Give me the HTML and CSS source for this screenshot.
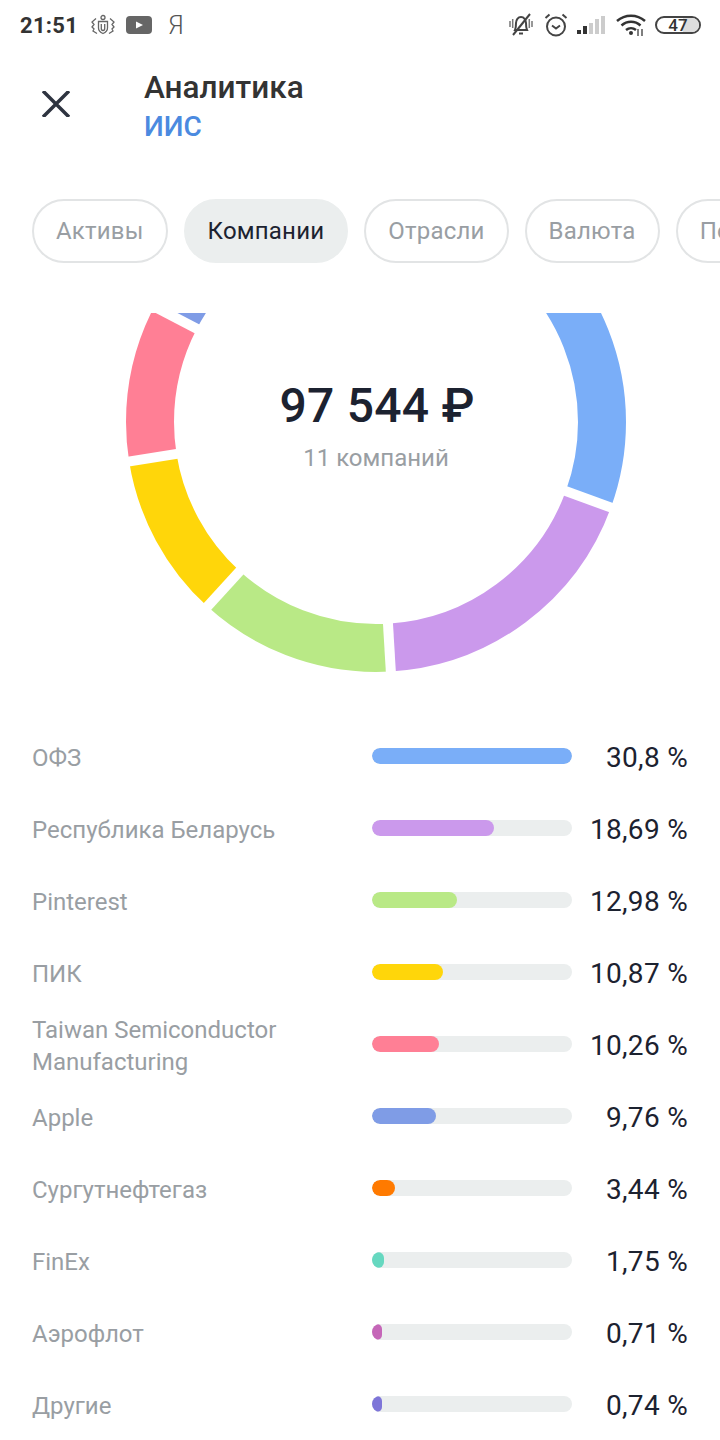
FILE: index.html
```html
<!DOCTYPE html>
<html lang="ru">
<head>
    <meta charset="UTF-8">
    <meta name="viewport" content="width=device-width, initial-scale=1.0">
    <title>Аналитика</title>
    <link rel="stylesheet" href="styles.css">
</head>
<body>

    <div class="status-bar">
        <div class="status-left">
            <span class="time">21:51</span>
            <svg class="icon-crest" viewBox="0 0 24 24" width="24" height="24" fill="none" stroke="#666" stroke-width="1.3">
                <circle cx="12" cy="4.500" r="2"/>
                <path d="M7.500 8.500h9v6.500c0 3-2 4.500-4.500 5.500-2.500-1-4.500-2.500-4.500-5.500z"/>
                <path d="M10.300 11v4.500c0 1 .7 2 1.700 2s1.700-1 1.700-2v-4.500"/>
                <path d="M5 5.500L1 9l2 2.500L1 14l2 2-1 2 4 2.500M19 5.500L23 9l-2 2.500 2 2.500-2 2 1 2-4 2.500"/>
            </svg>
            <svg class="icon-yt" viewBox="0 0 26 18" width="26" height="18">
                <rect width="26" height="18" rx="4" fill="#666"/>
                <path d="M10 5.500l7 3.500-7 3.500z" fill="#fff"/>
            </svg>
            <span class="ya">Я</span>
        </div>
        <div class="status-right">
            <svg viewBox="0 0 24 24" width="24" height="24" fill="none" stroke="#444" stroke-width="2">
                <path d="M6 17c1-2 1-4 1-7 0-3 2-6 5-6s5 3 5 6c0 3 0 5 1 7z"/>
                <path d="M10 20.500h4"/>
                <path d="M21 1L4 22"/>
                <path d="M1 8v6M3.700 6v9M20.300 6v9M23 8v6" stroke="#777" stroke-width="1.500"/>
            </svg>
            <svg class="icon-alarm" viewBox="0 0 24 24" width="24" height="24" fill="none" stroke="#444" stroke-width="2">
                <circle cx="12" cy="13.500" r="9"/>
                <path d="M8 12.500l4 3 4-3"/>
                <path d="M1.500 5l4-3.500M22.500 5l-4-3.500"/>
            </svg>
            <svg class="icon-signal" viewBox="0 0 28 20" width="28" height="20">
                <rect x="0" y="15" width="4" height="4" fill="#333"/>
                <rect x="6" y="11" width="4" height="8" fill="#333"/>
                <rect x="12" y="8" width="4" height="11" fill="#ccc"/>
                <rect x="18" y="4" width="4" height="15" fill="#ccc"/>
                <rect x="24" y="1" width="4" height="18" fill="#ccc"/>
            </svg>
            <svg class="icon-wifi" viewBox="0 0 30 24" width="30" height="24" fill="none" stroke="#333" stroke-width="2.500">
                <path d="M1 8c8-7 20-7 28 0"/>
                <path d="M5.500 12.500c5.500-5 13.500-5 19 0"/>
                <path d="M10 17c3-2.500 7-2.500 10 0"/>
                <circle cx="15" cy="20" r="2" fill="#333" stroke="none"/>
                <path d="M22 16v7M26 16v7" stroke-width="1.500" stroke="#555"/>
            </svg>
            <div class="battery"><span class="battery-level"></span><span class="battery-text">47</span></div>
        </div>
    </div>

    <div class="header">
        <svg class="close" viewBox="0 0 28 26" width="28" height="26" fill="none" stroke="#2e3440" stroke-width="3.500">
            <path d="M1 0l26 26M27 0L1 26"/>
        </svg>
        <div>
            <div class="title">Аналитика</div>
            <div class="subtitle">ИИС</div>
        </div>
    </div>

    <div class="chips">
        <div class="chip">Активы</div>
        <div class="chip active">Компании</div>
        <div class="chip">Отрасли</div>
        <div class="chip">Валюта</div>
        <div class="chip">Портфели</div>
    </div>

    <div class="chart">
        <svg viewBox="0 313 720 360" width="720" height="360" fill="none" stroke-width="48">
            <g transform="rotate(-90 376 422)">
                <circle cx="376" cy="422" r="226" pathLength="360" stroke="#7aaef8" stroke-dasharray="110 250"/>
                <circle cx="376" cy="422" r="226" pathLength="360" stroke="#cb99ec" stroke-dasharray="66.6 293.4" stroke-dashoffset="-110"/>
                <circle cx="376" cy="422" r="226" pathLength="360" stroke="#b9e986" stroke-dasharray="45.8 314.2" stroke-dashoffset="-176.6"/>
                <circle cx="376" cy="422" r="226" pathLength="360" stroke="#ffd60a" stroke-dasharray="38.5 321.5" stroke-dashoffset="-222.4"/>
                <circle cx="376" cy="422" r="226" pathLength="360" stroke="#ff7f95" stroke-dasharray="36.6 323.4" stroke-dashoffset="-260.9"/>
                <circle cx="376" cy="422" r="226" pathLength="360" stroke="#7f9ce6" stroke-dasharray="40 320" stroke-dashoffset="-297.5"/>
            </g>
            <g stroke="#fff" stroke-width="10">
                <path d="M376 422V160" transform="rotate(110 376 422)"/>
                <path d="M376 422V160" transform="rotate(176.6 376 422)"/>
                <path d="M376 422V160" transform="rotate(222.4 376 422)"/>
                <path d="M376 422V160" transform="rotate(260.9 376 422)"/>
                <path d="M376 422V160" transform="rotate(297.5 376 422)"/>
            </g>
        </svg>
        <div class="chart-center">
            <div class="total">97 544 ₽</div>
            <div class="count">11 компаний</div>
        </div>
    </div>

    <div class="list">
        <div class="row">
            <div class="name">ОФЗ</div>
            <div class="track"><div class="fill c1" style="width: 100%"></div></div>
            <div class="pct">30,8 %</div>
        </div>
        <div class="row">
            <div class="name">Республика Беларусь</div>
            <div class="track"><div class="fill c2" style="width: 61%"></div></div>
            <div class="pct">18,69 %</div>
        </div>
        <div class="row">
            <div class="name">Pinterest</div>
            <div class="track"><div class="fill c3" style="width: 42.5%"></div></div>
            <div class="pct">12,98 %</div>
        </div>
        <div class="row">
            <div class="name">ПИК</div>
            <div class="track"><div class="fill c4" style="width: 35.5%"></div></div>
            <div class="pct">10,87 %</div>
        </div>
        <div class="row">
            <div class="name">Taiwan Semiconductor Manufacturing</div>
            <div class="track"><div class="fill c5" style="width: 33.500%"></div></div>
            <div class="pct">10,26 %</div>
        </div>
        <div class="row">
            <div class="name">Apple</div>
            <div class="track"><div class="fill c6" style="width: 32%"></div></div>
            <div class="pct">9,76 %</div>
        </div>
        <div class="row">
            <div class="name">Сургутнефтегаз</div>
            <div class="track"><div class="fill c7" style="width: 11.500%"></div></div>
            <div class="pct">3,44 %</div>
        </div>
        <div class="row">
            <div class="name">FinEx</div>
            <div class="track"><div class="fill c8" style="width: 6%"></div></div>
            <div class="pct">1,75 %</div>
        </div>
        <div class="row">
            <div class="name">Аэрофлот</div>
            <div class="track"><div class="fill c9" style="width: 5%"></div></div>
            <div class="pct">0,71 %</div>
        </div>
        <div class="row">
            <div class="name">Другие</div>
            <div class="track"><div class="fill c10" style="width: 5%"></div></div>
            <div class="pct">0,74 %</div>
        </div>
    </div>

</body>
</html>
```

FILE: styles.css
```css
body {
    font-family: Roboto, "Noto Sans", sans-serif;
    background-color: #fff;
    margin: 0;
    overflow-x: hidden;
}

.status-bar {
    height: 48px;
    box-sizing: border-box;
    display: flex;
    justify-content: space-between;
    align-items: center;
    padding: 2px 19px 0 20px;
    color: #333;
}
.status-left, .status-right {
    display: flex;
    align-items: center;
}
.time {
    font-size: 22px;
    font-weight: 700;
    letter-spacing: 0.3px;
}
.icon-crest {
    margin-left: 13px;
}
.icon-yt {
    margin-left: 11px;
}
.ya {
    margin-left: 16px;
    font-size: 25px;
    font-weight: 300;
    color: #555;
}
.status-right {
    gap: 9px;
}
.icon-alarm {
    margin-left: 2px;
}
.icon-signal {
    margin-right: 2px;
}
.battery {
    position: relative;
    width: 46px;
    height: 18px;
    box-sizing: border-box;
    border: 2px solid #444;
    border-radius: 9px;
    overflow: hidden;
    display: flex;
    justify-content: center;
    align-items: center;
}
.battery-level {
    position: absolute;
    top: 0;
    bottom: 0;
    right: 0;
    width: 16px;
    background: #ddd;
}
.battery-text {
    position: relative;
    font-size: 17px;
    font-weight: 500;
}

.header {
    display: flex;
    align-items: flex-start;
    padding: 20px 0 0 42px;
}
.close {
    margin: 23px 74px 0 0;
}
.title {
    font-size: 31.5px;
    font-weight: 500;
    line-height: 39px;
    color: #333;
}
.subtitle {
    font-size: 28px;
    font-weight: 500;
    line-height: 39px;
    color: #4b8ae0;
}

.chips {
    display: flex;
    gap: 16px;
    margin-top: 53px;
    padding-left: 32px;
    overflow: hidden;
}
.chip {
    flex: none;
    height: 64px;
    box-sizing: border-box;
    padding: 0 22px;
    border: 2px solid #e2e4e5;
    border-radius: 32px;
    display: flex;
    align-items: center;
    font-size: 24px;
    letter-spacing: 0.2px;
    color: #999ea3;
}
.chip.active {
    background: #ebeeee;
    border-color: #ebeeee;
    color: #1c2230;
}

.chart {
    position: relative;
    height: 360px;
    margin-top: 50px;
}
.chart svg {
    display: block;
}
.chart-center {
    position: absolute;
    top: 62px;
    left: 32px;
    width: 690px;
    text-align: center;
}
.total {
    font-size: 48px;
    font-weight: 500;
    letter-spacing: 0.25px;
    line-height: 62px;
    color: #1c2230;
}
.count {
    font-size: 24px;
    line-height: 32px;
    margin-top: 5px;
    margin-right: 2px;
    color: #999ea3;
}

.list {
    margin-top: 48px;
    padding: 0 32px;
}
.row {
    display: grid;
    grid-template-columns: 340px 200px 1fr;
    align-items: center;
    height: 72px;
}
.name {
    padding-top: 2px;
    font-size: 24px;
    line-height: 32px;
    color: #999ea3;
    width: 300px;
}
.track {
    height: 16px;
    margin-bottom: 2px;
    border-radius: 8px;
    background: #ebeeee;
    overflow: hidden;
}
.fill {
    height: 100%;
    border-radius: 8px;
}
.pct {
    font-size: 28px;
    letter-spacing: 0.3px;
    text-align: right;
    color: #1c2230;
}
.c1 { background: #7aaef8; }
.c2 { background: #cb99ec; }
.c3 { background: #b9e986; }
.c4 { background: #ffd60a; }
.c5 { background: #ff7f95; }
.c6 { background: #7f9ce6; }
.c7 { background: #ff7a00; }
.c8 { background: #66d8c0; }
.c9 { background: #c566b8; }
.c10 { background: #7e75d8; }
```
